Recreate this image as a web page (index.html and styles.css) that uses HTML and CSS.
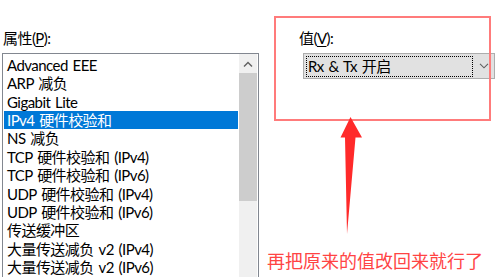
FILE: index.html
```html
<!DOCTYPE html>
<html lang="zh-CN">
<head>
<meta charset="utf-8">
<link rel="stylesheet" href="styles.css">
</head>
<body>
<div class="page">
  <div class="left">
    <div class="label">属性(<u>P</u>):</div>
    <div class="listbox">
      <ul class="items">
        <li>Advanced EEE</li>
        <li>ARP 减负</li>
        <li>Gigabit Lite</li>
        <li class="selected">IPv4 硬件校验和</li>
        <li>NS 减负</li>
        <li>TCP 硬件校验和 (IPv4)</li>
        <li>TCP 硬件校验和 (IPv6)</li>
        <li>UDP 硬件校验和 (IPv4)</li>
        <li>UDP 硬件校验和 (IPv6)</li>
        <li>传送缓冲区</li>
        <li>大量传送减负 v2 (IPv4)</li>
        <li>大量传送减负 v2 (IPv6)</li>
      </ul>
      <div class="scrollbar">
        <div class="sb-up">
          <svg width="10" height="6" viewBox="0 0 10 6"><path d="M1 5.5 L5 1.5 L9 5.5" fill="none" stroke="#606060" stroke-width="1.4"/></svg>
        </div>
        <div class="sb-thumb"></div>
        <div class="sb-track"></div>
      </div>
    </div>
  </div>
  <div class="right">
    <div class="label">值(<u>V</u>):</div>
    <div class="combo">
      <div class="combo-focus">Rx &amp; Tx 开启</div>
      <div class="combo-arrow">
        <svg width="10" height="6" viewBox="0 0 10 6"><path d="M1 0.8 L5 4.8 L9 0.8" fill="none" stroke="#606060" stroke-width="1.1"/></svg>
      </div>
    </div>
  </div>
</div>
<div class="highlight-box"></div>
<svg class="arrow" width="500" height="277" viewBox="0 0 500 277">
  <polygon points="350.5,117 340.5,137.5 345,137.5 347,234 355.5,137.5 362,137.5" fill="#ff2a2a"/>
</svg>
<div class="note">再把原来的值改回来就行了</div>
</body>
</html>
```

FILE: styles.css
```css
html, body {
  margin: 0;
  padding: 0;
  background: #ffffff;
}
body {
  width: 500px;
  height: 277px;
  overflow: hidden;
  position: relative;
  font-family: "Lato", "Noto Sans CJK SC", sans-serif;
  font-size: 15px;
  letter-spacing: -0.55px;
  word-spacing: 1.5px;
  color: #000;
}
.page {
  display: flex;
  padding-top: 29px;
}
.left {
  margin-left: 2px;
  width: 257px;
}
.label {
  height: 18px;
  line-height: 18px;
  margin-bottom: 6px;
  padding-left: 1px;
  white-space: nowrap;
}
.label u {
  text-decoration-thickness: 1px;
  text-underline-offset: 2px;
}
.listbox {
  display: flex;
  border: 1px solid #828790;
  border-bottom: none;
  height: 224px;
  background: #fff;
}
.items {
  list-style: none;
  margin: 0;
  padding: 2px 0 0 1px;
  width: 236px;
  overflow: hidden;
}
.items li {
  height: 18.36px;
  line-height: 18.36px;
  padding-left: 3px;
  white-space: nowrap;
}
.items li.selected {
  background: #0078d7;
  color: #fff;
}
.scrollbar {
  width: 18px;
  margin-left: 1px;
  margin-right: 1px;
  display: flex;
  flex-direction: column;
  background: #f0f0f0;
}
.sb-up {
  height: 19px;
  display: flex;
  align-items: center;
  justify-content: center;
}
.sb-thumb {
  height: 128px;
  background: #cdcdcd;
}
.sb-track {
  flex: 1;
}
.right {
  margin-left: 40px;
  display: flex;
  flex-direction: column;
}
.right .label {
  padding-left: 0;
}
.combo {
  margin-left: 4px;
  width: 190px;
  height: 24px;
  border: 1px solid #adadad;
  background: #e1e1e1;
  display: flex;
  align-items: center;
}
.combo-focus {
  margin-left: 2px;
  width: 164px;
  height: 19px;
  line-height: 19px;
  border: 1px dotted #000;
  padding-left: 1px;
  white-space: nowrap;
}
.combo-arrow {
  flex: 1;
  display: flex;
  justify-content: center;
  align-items: center;
}
.highlight-box {
  position: absolute;
  left: 274px;
  top: 16px;
  width: 213px;
  height: 101px;
  border: 2px solid #ff7b7b;
}
.arrow {
  position: absolute;
  left: 0;
  top: 0;
}
.note {
  position: absolute;
  left: 267px;
  top: 250px;
  font-family: "Noto Sans CJK SC", sans-serif;
  font-size: 18px;
  line-height: 20px;
  letter-spacing: 0;
  word-spacing: 0;
  color: #ff4444;
  white-space: nowrap;
}
```
